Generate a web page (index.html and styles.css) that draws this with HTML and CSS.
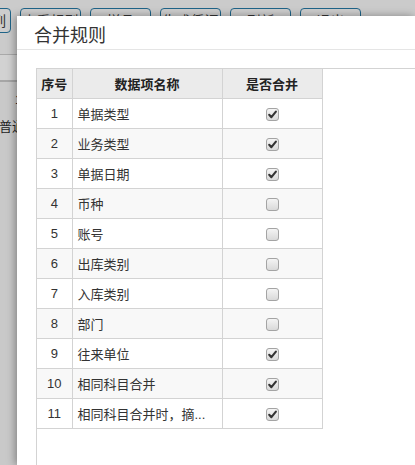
FILE: index.html
```html
<!DOCTYPE html>
<html lang="zh-CN">
<head>
  <meta charset="UTF-8" />
  <title>合并规则</title>
  <link rel="stylesheet" href="styles.css">
</head>
<body>
  <div class="page">
    <div class="toolbar">
      <button class="tool-btn">清除列</button>
      <button class="tool-btn">查看规则</button>
      <button class="tool-btn">样品</button>
      <button class="tool-btn">生成凭证</button>
      <button class="tool-btn">刷新</button>
      <button class="tool-btn">退出</button>
    </div>
    <div class="tabs"></div>
    <div class="tab-line"></div>
    <div class="page-body">
      <div class="mark">1</div>
      <div class="plain">普通凭证</div>
    </div>
  </div>

  <div class="dialog">
    <div class="dialog-title">合并规则</div>
    <div class="dialog-body">
      <div class="grid">
        <table class="rules">
          <thead>
            <tr>
              <th class="col-no">序号</th>
              <th class="col-name">数据项名称</th>
              <th class="col-merge">是否合并</th>
            </tr>
          </thead>
          <tbody id="rows"></tbody>
        </table>
      </div>
    </div>
  </div>

  <script>
    const rules = [
      ['单据类型', true],
      ['业务类型', true],
      ['单据日期', true],
      ['币种', false],
      ['账号', false],
      ['出库类别', false],
      ['入库类别', false],
      ['部门', false],
      ['往来单位', true],
      ['相同科目合并', true],
      ['相同科目合并时，摘...', true]
    ];

    const tbody = document.getElementById('rows');
    const tick = '<svg viewBox="0 0 13 13" width="13" height="13"><path d="M3.2 6.8 L5.4 9.2 L9.9 3.6" fill="none" stroke="#333" stroke-width="2.1" stroke-linecap="round" stroke-linejoin="round"/></svg>';

    rules.forEach((r, i) => {
      const tr = document.createElement('tr');
      tr.innerHTML =
        '<td class="col-no">' + (i + 1) + '</td>' +
        '<td class="col-name">' + r[0] + '</td>' +
        '<td class="col-merge"><span class="check">' + (r[1] ? tick : '') + '</span></td>';
      tbody.appendChild(tr);
    });
  </script>
</body>
</html>
```

FILE: styles.css
```css
* {
  box-sizing: border-box;
}

html {
  overflow: hidden;
}

body {
  margin: 0;
  width: 415px;
  height: 465px;
  overflow: hidden;
  position: relative;
  font-family: "Liberation Sans", "Noto Sans CJK SC", sans-serif;
  background: #cbcbcb;
  color: #333;
}

.page {
  height: 100%;
  overflow: hidden;
}

.toolbar {
  display: flex;
  gap: 9px;
  margin-left: -50px;
  padding-top: 8px;
  height: 54px;
}

.tool-btn {
  flex: none;
  width: 61px;
  height: 25px;
  padding: 0;
  border: 1px solid #1f6488;
  border-radius: 4px;
  background: #cdcdcd;
  color: #333;
  font-family: "Noto Sans CJK SC", sans-serif;
  font-size: 14px;
  line-height: 23px;
  text-align: right;
  padding-right: 4px;
}

.tool-btn + .tool-btn {
  text-align: center;
  padding-right: 0;
}

.tabs {
  height: 26px;
  border-top: 1px solid #a9a9a9;
  background: #d2d2d2;
}

.tab-line {
  height: 2px;
  background: #a6a6a6;
}

.page-body {
  background: #c9c9c9;
  height: 400px;
  padding-top: 10px;
  font-size: 13px;
}

.mark {
  padding-left: 15px;
  height: 24px;
  color: #222;
}

.plain {
  margin-left: -1px;
  color: #222;
}

.dialog {
  position: absolute;
  left: 17px;
  top: 16px;
  right: 0;
  bottom: 0;
  overflow: hidden;
  background: #fff;
  box-shadow: -2px 0 8px rgba(0, 0, 0, 0.35);
}

.dialog-title {
  height: 34px;
  padding: 5px 0 0 17px;
  font-size: 18px;
  color: #333;
  font-family: "Noto Sans CJK SC", sans-serif;
  border-bottom: 1px solid #e5e5e5;
}

.dialog-body {
  padding: 18px 0 0 19px;
}

.grid {
  width: 420px;
  height: 420px;
  border: 1px solid #d3d3d3;
}

.rules {
  border-collapse: collapse;
  table-layout: fixed;
  font-size: 13px;
}

.rules th,
.rules td {
  height: 30px;
  padding: 0;
  border-right: 1px solid #d3d3d3;
  border-bottom: 1px solid #d3d3d3;
  white-space: nowrap;
  overflow: hidden;
}

.rules th {
  height: 29px;
  background: #ebebeb;
  font-weight: bold;
  color: #222;
  text-align: center;
}

.col-no {
  width: 35px;
  text-align: center;
}

.col-name {
  width: 150px;
}

td.col-name {
  padding-left: 5px;
}

.col-merge {
  width: 100px;
  text-align: center;
}

.rules tbody tr:nth-child(even) td {
  background: #f8f8f8;
}

.check {
  display: inline-block;
  width: 13px;
  height: 13px;
  margin-top: 3px;
  vertical-align: middle;
  border: 1px solid #a4a4a4;
  border-radius: 3px;
  background: linear-gradient(#f4f4f4, #d9d9d9);
  line-height: 0;
}

.check svg {
  margin: -1px 0 0 -1px;
}
```
